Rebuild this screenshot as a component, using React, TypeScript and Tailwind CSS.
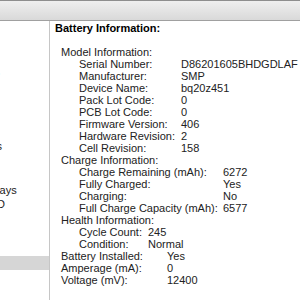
const sidebarItems = [
  'Contents',
  'Hardware',
  'ATA',
  'Audio (Built In)',
  'Bluetooth',
  'Card Reader',
  'Diagnostics',
  'Disc Burning',
  'Ethernet Cards',
  'Fibre Channel',
  'FireWire',
  'Graphics/Displays',
  'Hardware RAID',
  'Memory',
  'PCI Cards',
  'Parallel SCSI',
  'Power',
  'Printers',
  'SAS',
];

type Row = [string, string];

const modelInfo: Row[] = [
  ['Serial Number:', 'D86201605BHDGDLAF'],
  ['Manufacturer:', 'SMP'],
  ['Device Name:', 'bq20z451'],
  ['Pack Lot Code:', '0'],
  ['PCB Lot Code:', '0'],
  ['Firmware Version:', '406'],
  ['Hardware Revision:', '2'],
  ['Cell Revision:', '158'],
];

const chargeInfo: Row[] = [
  ['Charge Remaining (mAh):', '6272'],
  ['Fully Charged:', 'Yes'],
  ['Charging:', 'No'],
  ['Full Charge Capacity (mAh):', '6577'],
];

const healthInfo: Row[] = [
  ['Cycle Count:', '245'],
  ['Condition:', 'Normal'],
];

const batteryInfo: Row[] = [
  ['Battery Installed:', 'Yes'],
  ['Amperage (mA):', '0'],
  ['Voltage (mV):', '12400'],
];

function Table({ rows, labelWidth }: { rows: Row[]; labelWidth: string }) {
  return (
    <div>
      {rows.map(([label, value]) => (
        <div key={label} className="flex h-[12px] items-center whitespace-nowrap">
          <span className={`${labelWidth} shrink-0`}>{label}</span>
          <span>{value}</span>
        </div>
      ))}
    </div>
  );
}

export default function App() {
  return (
    <div
      className="flex h-[300px] w-[300px] flex-col overflow-hidden bg-white text-[11px] text-[#222]"
      style={{ fontFamily: '"Liberation Sans", Arial, sans-serif' }}
    >
      <div className="h-[21px] shrink-0 border-t border-b border-t-[#8e8e8e] border-b-[#a0a0a0] bg-gradient-to-b from-[#efefef] to-[#d9d9d9]" />
      <div className="flex min-h-0 flex-1">
        <div className="w-[50px] shrink-0 overflow-hidden border-r border-[#c6c6c6] pt-px">
          {sidebarItems.map((item) => (
            <div
              key={item}
              className={`flex h-[14.6px] items-center whitespace-nowrap ${
                item === 'Power' ? 'bg-[#d6d6d6]' : ''
              }`}
            >
              <span className="-ml-[72px]">{item}</span>
            </div>
          ))}
        </div>
        <div className="flex-1 pl-[5px] pt-px">
          <div className="flex h-[12px] items-center font-bold text-black">Battery Information:</div>
          <div className="mt-[12.5px] pl-[6px]">
            <div className="flex h-[12px] items-center">Model Information:</div>
            <div className="pl-[18px]">
              <Table rows={modelInfo} labelWidth="w-[102px]" />
            </div>
            <div className="flex h-[12px] items-center">Charge Information:</div>
            <div className="pl-[18px]">
              <Table rows={chargeInfo} labelWidth="w-[144px]" />
            </div>
            <div className="flex h-[12px] items-center">Health Information:</div>
            <div className="pl-[18px]">
              <Table rows={healthInfo} labelWidth="w-[69px]" />
            </div>
            <Table rows={batteryInfo} labelWidth="w-[106px]" />
          </div>
        </div>
      </div>
    </div>
  );
}
